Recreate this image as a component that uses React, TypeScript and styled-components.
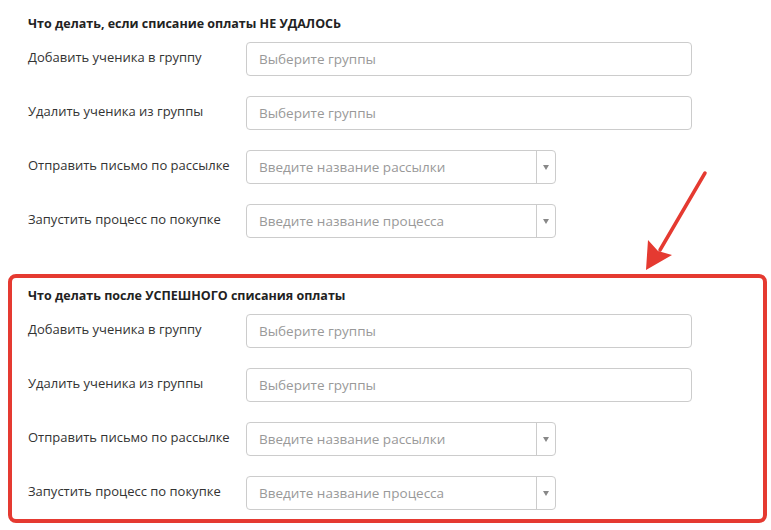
import React from "react";
import styled, { createGlobalStyle } from "styled-components";

const Global = createGlobalStyle`
  body { margin: 0; background: #fff; font-family: "Open Sans", "Liberation Sans", sans-serif; }
`;

const Page = styled.div`
  position: relative;
  width: 771px;
  height: 530px;
  padding-top: 2px;
  box-sizing: border-box;
  overflow: hidden;
`;

const Section = styled.div<{ $highlight?: boolean }>`
  margin: 0 4px 23px 8px;
  border: 4px solid ${(p) => (p.$highlight ? "#e53a31" : "transparent")};
  border-radius: 8px;
  padding: 10px 16px 9px 16px;
`;

const Heading = styled.div`
  font-size: 12.5px;
  font-weight: 700;
  color: #222;
  line-height: 16px;
  margin-bottom: 10px;
`;

const Rows = styled.div`
  display: flex;
  flex-direction: column;
  gap: 20px;
`;

const Row = styled.div`
  display: flex;
  align-items: flex-start;
  height: 34px;
`;

const Label = styled.div`
  width: 218px;
  font-size: 13px;
  color: #333;
  line-height: 30px;
`;

const Field = styled.div<{ $wide?: boolean }>`
  display: flex;
  align-items: center;
  box-sizing: border-box;
  width: ${(p) => (p.$wide ? "446px" : "310px")};
  height: 34px;
  border: 1px solid #ccc;
  border-radius: 4px;
  font-size: 13.5px;
  color: #999;
`;

const Placeholder = styled.div`
  flex: 1;
  padding-left: 12px;
`;

const Caret = styled.div`
  width: 18px;
  height: 100%;
  border-left: 1px solid #ccc;
  display: flex;
  align-items: center;
  justify-content: center;
  &::after {
    content: "";
    border-left: 3px solid transparent;
    border-right: 3px solid transparent;
    border-top: 5px solid #888;
  }
`;

const Arrow = styled.svg`
  position: absolute;
  left: 630px;
  top: 160px;
`;

const rows: [string, string, boolean][] = [
  ["Добавить ученика в группу", "Выберите группы", true],
  ["Удалить ученика из группы", "Выберите группы", true],
  ["Отправить письмо по рассылке", "Введите название рассылки", false],
  ["Запустить процесс по покупке", "Введите название процесса", false],
];

function Block({ title, highlight }: { title: React.ReactNode; highlight?: boolean }) {
  return (
    <Section $highlight={highlight}>
      <Heading>{title}</Heading>
      <Rows>
        {rows.map(([label, ph, wide]) => (
          <Row key={label}>
            <Label>{label}</Label>
            <Field $wide={wide}>
              <Placeholder>{ph}</Placeholder>
              {!wide && <Caret />}
            </Field>
          </Row>
        ))}
      </Rows>
    </Section>
  );
}

export default function App() {
  return (
    <Page>
      <Global />
      <Block title="Что делать, если списание оплаты НЕ УДАЛОСЬ" />
      <Block title="Что делать после УСПЕШНОГО списания оплаты" highlight />
      <Arrow width="90" height="120" viewBox="0 0 90 120">
        <line x1="75" y1="13" x2="30" y2="90" stroke="#e53a31" strokeWidth="3.5" strokeLinecap="round" />
        <polygon points="16,110 18,80 28,91 42,95" fill="#e53a31" />
      </Arrow>
    </Page>
  );
}
